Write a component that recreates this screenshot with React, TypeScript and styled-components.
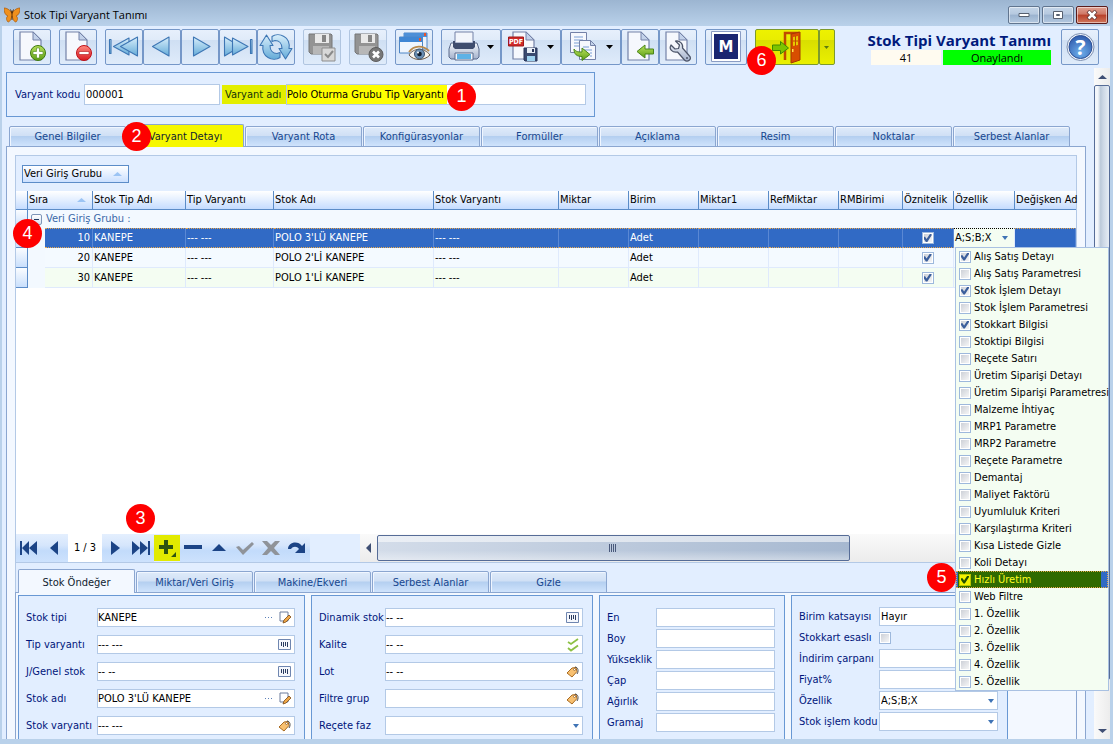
import React from 'react';
import styled, { createGlobalStyle, css } from 'styled-components';

const line = '#b3c9e6';
const edge = '#5b8cc8';
const navy = '#00157b';
const ui = '"DejaVu Sans Condensed", "DejaVu Sans", sans-serif';
const segoe = '"Open Sans", "Noto Sans", sans-serif';

const Global = createGlobalStyle`
  * { box-sizing: border-box; }
  body { margin: 0; overflow: hidden; font-family: ${ui}; font-size: 11px; line-height: 14px; color: #000; }
  button, input, select { font: inherit; color: inherit; margin: 0; }
  svg { display: block; flex: none; }
`;

const Window = styled.div`
  height: 100vh;
  display: flex;
  flex-direction: column;
  background: #b9d1ea;
  padding: 0 3px 5px 2px;
`;
const TitleBar = styled.header`
  height: 26px;
  flex: none;
  display: flex;
  align-items: center;
  gap: 4px;
  margin: 0 -3px 0 -2px;
  padding: 4px 5px 0 4px;
  background: linear-gradient(#9cb5d1, #b9d1ea);
  font-family: ${segoe};
  font-size: 11px;
  line-height: 18px;
`;
const WindowTitle = styled.span`flex: 1;`;
const WindowButtons = styled.div`display: flex; gap: 2px;`;
const WindowButton = styled.button<{ $close?: boolean }>`
  width: 32px;
  height: 18px;
  padding: 0;
  display: grid;
  place-items: center;
  border: 1px solid ${p => (p.$close ? '#5b1c1c' : '#61758f')};
  border-radius: 2px;
  box-shadow: inset 0 0 0 1px rgba(255, 255, 255, 0.5);
  background: ${p => p.$close
    ? 'linear-gradient(#e0a294, #cf7866 45%, #b8402a 50%, #d0775c)'
    : 'linear-gradient(#c5d5e8, #b6c9df 45%, #9bb3cf 50%, #b3c8e0)'};
`;

const Client = styled.main`
  flex: 1;
  min-height: 0;
  display: flex;
  flex-direction: column;
  overflow: hidden;
  background: #e2eeff;
`;
const Toolbar = styled.div`
  flex: none;
  height: 42px;
  display: flex;
  align-items: flex-start;
  gap: 8px;
  padding: 3px 11px 0;
`;
const ToolGroup = styled.div`display: flex; flex: none; position: relative;`;
const ToolButton = styled.button<{ $w?: number; $off?: boolean; $lit?: boolean }>`
  flex: none;
  width: ${p => p.$w ?? 38}px;
  height: 36px;
  padding: 0;
  display: flex;
  align-items: center;
  border: 1px solid ${p => (p.$lit ? '#7d9a2c' : p.$off ? '#b0c5e0' : '#7597c8')};
  border-radius: 2px;
  background: ${p => (p.$lit
    ? 'linear-gradient(#eef200, #e9ed00 28%, #d9de00 30%, #eaf000)'
    : 'linear-gradient(#e7f0fc, #e0ebf9 28%, #cfdff3 30%, #dfebfa)')};
`;
const Summary = styled.div`
  flex: none;
  margin: 0 2px 0 auto;
  display: flex;
  flex-direction: column;
  font-family: ${segoe};
`;
const SummaryTitle = styled.h1`
  margin: 0;
  height: 21px;
  font-size: 15px;
  line-height: 22px;
  font-weight: 700;
  text-align: right;
  white-space: nowrap;
  color: #001a7c;
`;
const SummaryRow = styled.div`display: flex; gap: 2px; justify-content: flex-end;`;
const SummaryCell = styled.span<{ $w: number; $bg: string }>`
  width: ${p => p.$w}px;
  height: 15px;
  text-align: center;
  font-size: 11px;
  line-height: 16px;
  background: ${p => p.$bg};
`;
const Badge = styled.span<{ $x: number; $y: number }>`
  position: absolute;
  z-index: 5;
  left: ${p => p.$x}px;
  top: ${p => p.$y}px;
  width: 29px;
  height: 29px;
  border-radius: 50%;
  background: #fe0000;
  color: #fff;
  font: 18px/29px "Liberation Sans", sans-serif;
  text-align: center;
`;

const Body = styled.div`flex: 1; min-height: 0; display: flex;`;
const Content = styled.div`
  flex: 1;
  min-width: 0;
  display: flex;
  flex-direction: column;
  align-items: stretch;
  padding: 4px 8px 0 4px;
`;
const HeaderBox = styled.section`
  position: relative;
  align-self: flex-start;
  height: 45px;
  display: flex;
  align-items: center;
  padding: 0 8px;
  border: 1px solid #6898d4;
`;
const HeaderLabel = styled.label<{ $lit?: boolean }>`
  width: ${p => (p.$lit ? 64 : 69)}px;
  height: 19px;
  margin-left: ${p => (p.$lit ? 2 : 0)}px;
  padding-left: ${p => (p.$lit ? 3 : 0)}px;
  line-height: 20px;
  white-space: nowrap;
  color: ${p => (p.$lit ? '#14340a' : navy)};
  background: ${p => (p.$lit ? '#e3ee00' : 'none')};
`;
const HeaderInput = styled.input<{ $w: number; $lit?: boolean }>`
  width: ${p => p.$w}px;
  height: 21px;
  padding: 0 ${p => (p.$lit ? 0 : 1)}px;
  border: 1px solid ${line};
  background: ${p => (p.$lit ? 'linear-gradient(90deg, #ff0 160px, #fff 160px)' : '#fff')};
`;

const Tabs = styled.div<{ $sub?: boolean }>`
  position: relative;
  flex: none;
  height: ${p => (p.$sub ? 24 : 23)}px;
  margin: ${p => (p.$sub ? 6 : 7)}px 0 -1px;
  padding-left: ${p => (p.$sub ? 2 : 3)}px;
  display: flex;
  align-items: flex-end;
  gap: 1px;
`;
const Tab = styled.button<{ $on?: boolean; $lit?: boolean }>`
  width: 117px;
  height: ${p => (p.$on ? 100 : 92)}%;
  padding: 2px 0 0;
  border: 1px solid #8ba6d0;
  border-bottom: ${p => (p.$on ? '0' : '1px solid #8ba6d0')};
  border-radius: 2px 2px 0 0;
  box-shadow: ${p => (p.$on ? 'none' : 'inset 1px 1px 0 #f0f6ff')};
  color: ${p => (p.$on ? '#101c30' : '#17478f')};
  background: ${p => (p.$lit ? '#f6f700' : p.$on ? '#f3f8ff'
    : 'linear-gradient(#dfebfa, #d0e0f5 45%, #b4cff0 50%, #cfe3fc)')};
`;
const Page = styled.div`
  flex: 1;
  min-height: 0;
  display: flex;
  flex-direction: column;
  padding: 8px 8px 0;
  border: 1px solid #8ba6d0;
  border-bottom: 0;
  background: #f3f8ff;
`;
const Inner = styled.div`
  flex: 1;
  min-height: 0;
  display: flex;
  flex-direction: column;
  border: 1px solid ${line};
  border-bottom: 0;
  background: #e2eeff;
`;
const GroupPanel = styled.div`height: 35px; flex: none; padding: 9px 6px;`;
const GroupChip = styled.button`
  width: 107px;
  height: 18px;
  padding: 0 6px 0 1px;
  display: flex;
  align-items: center;
  justify-content: space-between;
  border: 1px solid ${edge};
  background: linear-gradient(#fff, #cbe0ff);
`;
const GridArea = styled.div`position: relative; flex: 1; min-height: 0; background: #fff;`;

const Grid = styled.table`
  width: 100%;
  table-layout: fixed;
  border-collapse: separate;
  border-spacing: 0;
`;
const Head = styled.th`
  height: 19px;
  padding: 0 0 0 1px;
  white-space: nowrap;
  text-align: left;
  font-weight: 400;
  border-right: 1px solid ${edge};
  border-bottom: 1px solid ${edge};
  background: linear-gradient(#fff, #e9f2ff 40%, #c5dcff);
  &:last-child { border-right: 0; }
`;
const HeadSort = styled.span`display: flex; align-items: center; justify-content: space-between; padding-right: 6px;`;
const Mark = styled.td<{ $short?: boolean }>`
  height: ${p => (p.$short ? 18 : 20)}px;
  padding: 0;
  border-right: 1px solid ${edge};
  border-bottom: 1px solid ${edge};
  background: linear-gradient(#fbfdff, #c9dffc);
`;
const GroupCell = styled.td`
  height: 18px;
  padding: 0 3px;
  background: #f3f9ff;
  color: #3a68a8;
`;
const GroupLine = styled.span`display: flex; align-items: center; gap: 4px;`;
const Expander = styled.button`
  width: 11px;
  height: 11px;
  padding: 0;
  border: 1px solid #7d95b8;
  border-radius: 2px;
  background: linear-gradient(#fff, #d5e2f4);
  display: grid;
  place-items: center;
`;
const Cell = styled.td<{ $tone: 'sel' | 'a' | 'b' | 'edit'; $align?: string }>`
  height: 20px;
  padding: 0 2px 0 1px;
  white-space: nowrap;
  text-align: ${p => p.$align ?? 'left'};
  border-right: 1px solid #dfeafc;
  border-bottom: 1px solid #dfeafc;
  background: ${p => ({ a: '#f4faff', b: '#f4fdf2', sel: '#316ac5', edit: '#f4fdf2' })[p.$tone]};
  ${p => p.$tone === 'sel' && css`
    color: #fff;
    border-right-color: #5a88d4;
    border-top: 1px dotted #e8a850;
    border-bottom: 1px dotted #e8a850;
  `}
  ${p => p.$tone === 'edit' && css`position: relative; border-top: 1px dotted #000;`}
`;
const Indent = styled.td`padding: 0; background: #f3f9ff;`;

const Check = styled.input.attrs({ type: 'checkbox' })`
  appearance: none;
  flex: none;
  width: 12px;
  height: 12px;
  display: inline-grid;
  place-items: center;
  vertical-align: middle;
  border: 1px solid #9db8dc;
  box-shadow: inset 0 0 0 1px #fff;
  background: linear-gradient(135deg, #c8ccd4, #fafafa);
  &:checked::before {
    content: '';
    width: 8px;
    height: 8px;
    background: #3c5f9c;
    clip-path: polygon(0 35%, 20% 35%, 38% 62%, 80% 0, 100% 0, 100% 20%, 48% 100%, 30% 100%, 0 55%);
  }
`;
const CellSelect = styled.div`display: flex; align-items: center; justify-content: space-between; padding-right: 4px;`;
const Popup = styled.div`
  position: absolute;
  z-index: 4;
  left: 1px;
  top: 18px;
  width: 154px;
  border: 1px solid #a9c1e2;
  background: #f4fdf2;
  color: #000;
`;
const Option = styled.label<{ $on?: boolean }>`
  height: 17px;
  display: flex;
  align-items: center;
  gap: 3px;
  padding-left: 3px;
  white-space: nowrap;
  ${p => p.$on && css`
    color: #ffff20;
    border: 1px dotted #e8a850;
    padding-left: 2px;
    background: linear-gradient(90deg, #316ac5 1px, #2f6a00 1px calc(100% - 6px), #316ac5 0);
    ${Check} { background: #f2f200; border-color: #b8c400; box-shadow: none; }
    ${Check}:checked::before { background: #205000; }
  `}
`;

const Footer = styled.div`
  position: relative;
  flex: none;
  height: 29px;
  display: flex;
  border-bottom: 1px solid ${line};
`;
const NavButton = styled.button<{ $lit?: boolean }>`
  width: 26px;
  height: ${p => (p.$lit ? 26 : 28)}px;
  margin-top: ${p => (p.$lit ? 1 : 0)}px;
  padding: 0;
  border: 0;
  display: grid;
  place-items: center;
  background: ${p => (p.$lit ? '#e2ea00' : 'linear-gradient(#e4effe, #d6e6fc 40%, #c2dbfb 60%, #cde2fd)')};
`;
const NavText = styled.span`
  width: 34px;
  text-align: center;
  line-height: 28px;
  background: #fff;
`;
const HScroll = styled.div`
  flex: 1;
  margin-left: 50px;
  display: grid;
  grid-template-columns: 17px 66% 1fr;
  align-items: stretch;
  background: linear-gradient(#fafafa, #ececec);
`;
const Arrow = styled.button`
  padding: 0;
  border: 0;
  background: none;
  display: grid;
  place-items: center;
`;
const HThumb = styled.div`
  margin: 1px 0;
  border: 1px solid #566c97;
  border-radius: 2px;
  display: grid;
  place-items: center;
  background:
    linear-gradient(rgba(255, 255, 255, 0.55) 25%, rgba(255, 255, 255, 0) 27%, rgba(255, 255, 255, 0) 60%, rgba(255, 255, 255, 0.4)),
    linear-gradient(90deg, #d3dce9, #a6b8d0);
`;
const VScroll = styled.div`
  width: 16px;
  flex: none;
  display: flex;
  flex-direction: column;
  background: linear-gradient(90deg, #fafafa, #ececec);
  & > button { height: 17px; }
`;
const VThumb = styled.div`
  height: 595px;
  max-height: calc(100% - 76px);
  border: 1px solid #566c97;
  border-radius: 2px;
  background: linear-gradient(90deg, #f3f6fa 20%, #bccada 40%, #cdd8e6 60%, #e6edf5);
`;
const VTrack = styled.div`flex: 1;`;

const Forms = styled.div`
  flex: none;
  display: flex;
  gap: 6px;
  margin: 0 -1px;
  padding: 2px 2px 0;
  border: 1px solid #8ba6d0;
  border-bottom: 0;
  background: #f3f8ff;
`;
const FormBox = styled.fieldset<{ $cols: string; $gap: number; $padX: number; $top: number }>`
  min-width: 0;
  margin: 0;
  display: grid;
  grid-template-columns: ${p => p.$cols};
  grid-auto-rows: 19px;
  row-gap: ${p => p.$gap}px;
  align-items: center;
  align-content: start;
  padding: ${p => p.$top}px ${p => p.$padX}px 4px 7px;
  border: 1px solid #6898d4;
  border-bottom: 0;
  background: #e2eeff;
  color: ${navy};
  white-space: nowrap;
`;
const Field = styled.div`
  height: 19px;
  display: flex;
  align-items: center;
  gap: 6px;
  padding-right: 3px;
  border: 1px solid ${line};
  background: #fff;
  color: #000;
`;
const FieldInput = styled.input`
  flex: 1;
  min-width: 0;
  height: 17px;
  padding: 0;
  border: 0;
  background: none;
`;
const FieldSelect = styled.select`
  appearance: none;
  flex: 1;
  min-width: 0;
  height: 17px;
  padding: 0 1px;
  border: 0;
  background: none;
`;
const IconButton = styled.button`padding: 0; border: 0; background: none; display: block;`;
const HiddenDefs = styled.svg`position: absolute;`;

/* ---------- icons ---------- */

const Tool = ({ w = 36, children }: { w?: number; children: React.ReactNode }) => (
  <svg width={w} height="34" viewBox={`1 1 ${w} 34`} aria-hidden="true">{children}</svg>
);
const Sheet = ({ x = 7, y = 3, w = 21, h = 28 }) => (
  <>
    <path d={`M${x} ${y}h${w - 8}l8 8v${h - 8}h${-w}z`} fill="#f6f8fd" stroke="#7482a8" strokeWidth="1.2" />
    <path d={`M${x + w - 8} ${y}v8h8z`} fill="#c3d2ea" stroke="#7482a8" strokeWidth="1" />
  </>
);
const Down = ({ x }: { x: number }) => <path d={`M${x} 16h7l-3.500 4z`} fill="#000" />;
const Defs = () => (
  <HiddenDefs width="0" height="0" aria-hidden="true">
    <defs>
      <linearGradient id="sky" x1="0" y1="0" x2="0" y2="1">
        <stop offset="0" stopColor="#d8eefb" /><stop offset="1" stopColor="#64abd8" />
      </linearGradient>
      <linearGradient id="lime" x1="0" y1="0" x2="0" y2="1">
        <stop offset="0" stopColor="#b9e25c" /><stop offset="1" stopColor="#5d9e14" />
      </linearGradient>
      <linearGradient id="red" x1="0" y1="0" x2="0" y2="1">
        <stop offset="0" stopColor="#ff8a80" /><stop offset="1" stopColor="#d81820" />
      </linearGradient>
      <linearGradient id="steel" x1="0" y1="0" x2="0" y2="1">
        <stop offset="0" stopColor="#f4f7fb" /><stop offset="1" stopColor="#a3b1cc" />
      </linearGradient>
      <radialGradient id="help" cx="0.5" cy="0.75" r="0.8">
        <stop offset="0" stopColor="#6fb0ec" /><stop offset="1" stopColor="#2a55a8" />
      </radialGradient>
    </defs>
  </HiddenDefs>
);
const blue = { fill: 'url(#sky)', stroke: '#3d76b4', strokeWidth: 1.1, strokeLinejoin: 'round' as const };
const IconNew = () => (
  <Tool><Sheet /><circle cx="25" cy="24" r="7.500" fill="url(#lime)" stroke="#3f7a10" />
    <path d="M23.500 19h3v3.500h3.500v3h-3.500v3.500h-3v-3.500h-3.500v-3h3.500z" fill="#fff" stroke="#4a8518" strokeWidth=".6" /></Tool>
);
const IconDelete = () => (
  <Tool><Sheet /><circle cx="25" cy="24" r="7.500" fill="url(#red)" stroke="#c01018" />
    <path d="M20 22.500h10v3h-10z" fill="#fff" stroke="#b01018" strokeWidth=".6" /></Tool>
);
const IconFirst = () => (
  <Tool><path d="M4.500 10.500h1.500v14h-1.500z" {...blue} /><path d="M24 9v17L8.500 17.500z" {...blue} /><path d="M32.500 8v19L15.500 17.500z" {...blue} /></Tool>
);
const IconPrev = () => <Tool><path d="M26 8v19L9.500 17.500z" {...blue} /></Tool>;
const IconNext = () => <Tool><path d="M12.500 8v19L29 17.500z" {...blue} /></Tool>;
const IconLast = () => (
  <Tool><path d="M5.500 8v19L21.500 17.500z" {...blue} /><path d="M13.500 9v17L29 17.500z" {...blue} /><path d="M31.500 10.500h1.500v14h-1.500z" {...blue} /></Tool>
);
const IconRefresh = () => (
  <Tool>
    <path d="M3 16.500L9.500 6 16 16.500h-3c0 5 3 8 7 8l3-1v5c-3 2-8 2.500-12 0-4-2-6-7-5-12z" {...blue} />
    <path d="M35 19.500L28.500 30 22 19.500h3c0-5-3-8-7-8l-3 1v-5c3-2 8-2.500 12 0 4 2 6 7 5 12z" {...blue} />
  </Tool>
);
const Floppy = () => (
  <>
    <path d="M6 5h22l1 1v19H8l-2-2z" fill="#939393" stroke="#777" />
    <path d="M12 5h14v9H12z" fill="#e9e9e9" /><path d="M19 6h4v7h-4z" fill="#858585" />
    <path d="M10 17h16v8H10z" fill="#b7b7b7" />
  </>
);
const IconSave = () => (
  <Tool><Floppy /><path d="M19 19h13v13H19z" fill="#d8d8d8" stroke="#8d8d8d" /><path d="M22 25l3 3 5-6" fill="none" stroke="#8a8a8a" strokeWidth="2" /></Tool>
);
const IconCancel = () => (
  <Tool><Floppy /><circle cx="27" cy="25.500" r="7" fill="#777" stroke="#5d5d5d" /><path d="M24 22.500l6 6m0-6l-6 6" stroke="#fff" strokeWidth="2.600" /></Tool>
);
const IconPreview = () => (
  <Tool>
    <path d="M9 4h23v16H9z" fill="#e9f2fd" stroke="#4f86c6" /><path d="M9 4h23v4H9z" fill="#4c8fd8" /><path d="M29 4h2v3h-2z" fill="#e8542c" />
    <path d="M4.500 8h23v16h-23z" fill="#eef5fe" stroke="#4f86c6" /><path d="M5 8h22v5H5z" fill="#3f86d4" /><path d="M24 9h2v3h-2z" fill="#e8542c" />
    <path d="M14 26c4-7 15-8 21 0-6 6-16 6-21 0z" fill="#fbf6ee" stroke="#6c5a48" /><path d="M14 23c5-7 14-7 20-1" fill="none" stroke="#b98a4c" strokeWidth="1.800" />
    <circle cx="24.500" cy="25" r="5" fill="#6a8fb4" stroke="#3b5470" /><circle cx="24.500" cy="25" r="2.300" fill="#101c2c" /><circle cx="23" cy="23.500" r="1" fill="#fff" />
  </Tool>
);
const IconPrint = () => (
  <Tool w={58}>
    <path d="M10 14h26l2 6v8l-2 2H10l-2-2v-8z" fill="url(#steel)" stroke="#5a6a8c" />
    <path d="M14 3h18v11H14z" fill="#f2f5fb" stroke="#7482a8" />
    <path d="M12 12h2v2h18v-2h2v6l-2 2H14l-2-2z" fill="#3f4d6e" />
    <path d="M14 24h18v7H14z" fill="#f4f8fd" stroke="#5a6a8c" /><path d="M16 25h14v5H16z" fill="#5eb2e6" />
    <Down x={46} />
  </Tool>
);
const IconPdf = () => (
  <Tool w={58}>
    <Sheet x={12} w={21} h={27} />
    <path d="M7.500 8h15v9h-15z" fill="#d02a2a" stroke="#a01818" />
    <text x="15" y="15" textAnchor="middle" fontFamily="DejaVu Sans Condensed" fontWeight="700" fontSize="7" fill="#fff">PDF</text>
    <path d="M23 19h13v13H24l-1-1z" fill="#3a4a70" stroke="#26345a" /><path d="M26 19h8v5h-8z" fill="#e7edf6" /><path d="M31 20h2v3h-2z" fill="#26345a" /><path d="M26 27h8v5h-8z" fill="#9fd2f0" />
    <Down x={46} />
  </Tool>
);
const IconCopy = () => (
  <Tool w={58}>
    <path d="M9.500 3.500h16v20h-16z" fill="#f6f8fd" stroke="#7482a8" /><path d="M13 8h9m-9 3h9m-9 3h9m-9 3h5" stroke="#7b9fd4" />
    <path d="M18.500 11.500h11l5 5v14h-16z" fill="#f6f8fd" stroke="#7482a8" /><path d="M29.500 11.500v5h5z" fill="#c3d2ea" stroke="#7482a8" /><path d="M22 18h6m-6 3h9m-2 3h2m-2 3h2" stroke="#7b9fd4" />
    <path d="M13 20c2 3 5 3 8 3v-4l8 6.500-8 6v-4c-5 0-8-2-8-7.500z" fill="url(#lime)" stroke="#4a8518" />
    <Down x={45} />
  </Tool>
);
const greenArrow = { fill: 'url(#lime)', stroke: '#4a8518', strokeLinejoin: 'round' as const };
const IconImport = () => <Tool><Sheet /><path d="M16 22.500l8-6.500v4h8.500v5H24v4z" {...greenArrow} /></Tool>;
const IconTools = () => (
  <Tool><Sheet />
    <path d="M12 16l4 4 3.500-.5 1-3.500-4-4c4-1 8 3 7 7l7 8c3 3-2 7-5 4l-7-8c-5 1-9-3-6.500-7z" fill="url(#steel)" stroke="#4c5468" strokeWidth="1.200" strokeLinejoin="round" />
    <circle cx="28" cy="29" r="1" fill="#4c5468" />
  </Tool>
);
const IconM = () => (
  <Tool w={40}>
    <path d="M6.500 2.500h29v30h-29z" fill="#fff" stroke="#8a9cc4" /><path d="M9 5h24v25H9z" fill="#1a2570" />
    <text x="21" y="23" textAnchor="middle" fontFamily="DejaVu Sans" fontWeight="700" fontSize="15" fill="#fff">M</text>
  </Tool>
);
const IconExit = () => (
  <Tool w={62}>
    <path d="M30 31V4h14" fill="none" stroke="#c04a00" strokeWidth="2.500" />
    <path d="M36 5l9-2v28l-9 3z" fill="#d84e00" stroke="#a63800" />
    <path d="M38 8l5-1v9l-5 1z" fill="#e8c800" /><path d="M40.500 7v10M38 12h5" stroke="#c04a00" /><path d="M37 20h1.500v3H37z" fill="#ffe14a" />
    <path d="M17.500 16h8v-3.500l8 6.500-8 6v-3.500h-8z" fill="#7cc400" stroke="#3f8a00" />
  </Tool>
);
const IconHelp = () => (
  <Tool>
    <circle cx="19.500" cy="18" r="13.500" fill="#f1f5fb" stroke="#7d8fb0" /><circle cx="19.500" cy="18" r="11.500" fill="url(#help)" stroke="#2d5096" />
    <text x="19.500" y="25.500" textAnchor="middle" fontFamily="Open Sans" fontWeight="700" fontSize="21" fill="#fff">?</text>
  </Tool>
);
const Butterfly = () => (
  <svg width="16" height="16" viewBox="0 0 16 16" aria-hidden="true">
    <path d="M8 7C6 2 2 1 0 1c0 4 1 7 4 8-2 1-2 4 0 6 2 0 3-3 4-6 1 3 2 6 4 6 2-2 2-5 0-6 3-1 4-4 4-8-2 0-6 1-8 6z" fill="#f0901c" stroke="#a85808" strokeWidth=".7" />
    <path d="M8 5v8M6.500 2.500L8 6l1.500-3.500" fill="none" stroke="#5a2c00" />
  </svg>
);
const Tri = ({ c = '#4f7fbf', up = false, w = 7 }: { c?: string; up?: boolean; w?: number }) => (
  <svg width={w} height="4" viewBox="0 0 8 4" preserveAspectRatio="none" aria-hidden="true"><path d={up ? 'M0 4h8L4 0z' : 'M0 0h8L4 4z'} fill={c} /></svg>
);
const Nav = ({ d, c = '#1c4486' }: { d: string; c?: string }) => (
  <svg width="20" height="18" viewBox="0 0 20 18" aria-hidden="true"><path d={d} fill={c} /></svg>
);
const Dots = () => <svg width="9" height="9" viewBox="0 0 9 9" aria-hidden="true"><path d="M1 4h1v1H1zM4 4h1v1H4zM7 4h1v1H7z" fill="#5a7fb8" /></svg>;
const EditIcon = () => (
  <svg width="12" height="13" viewBox="0 0 12 13" aria-hidden="true">
    <path d="M1 1h8v9H1z" fill="#fff" stroke="#6c7c9c" /><path d="M4 12l1-3 5-5 2 2-5 5z" fill="#f0a848" stroke="#7a4a18" strokeWidth=".8" />
  </svg>
);
const BarsIcon = () => (
  <svg width="13" height="11" viewBox="0 0 13 11" aria-hidden="true">
    <path d="M.5.5h12v10H.5z" fill="#f6f8fd" stroke="#6f86b0" /><path d="M3.500 3v4M5.500 3v5M7.500 3v4M9.500 3v5" stroke="#2b3c60" />
  </svg>
);
const TagIcon = () => (
  <svg width="13" height="12" viewBox="0 0 13 12" aria-hidden="true">
    <path d="M1 7l5-5 4-.5 1 4-5 5.500z" fill="#f8c070" stroke="#a86a20" /><circle cx="8.500" cy="3.500" r="1" fill="#fff" stroke="#7a4a18" strokeWidth=".6" />
    <path d="M9 1c3 0 4 4 2 7" fill="none" stroke="#4a4a4a" />
  </svg>
);
const ChecksIcon = () => (
  <svg width="12" height="14" viewBox="0 0 12 14" aria-hidden="true"><path d="M1 4l3 2 7-5M1 10l3 2.500L11 7.500" fill="none" stroke="#8cc044" strokeWidth="1.800" /></svg>
);
const Chevron = () => <Tri w={6} c="#3f73b5" />;

/* ---------- data ---------- */

const mainTabs = ['Genel Bilgiler', 'Varyant Detayı', 'Varyant Rota', 'Konfigürasyonlar', 'Formüller', 'Açıklama', 'Resim', 'Noktalar', 'Serbest Alanlar'];
const subTabs = ['Stok Öndeğer', 'Miktar/Veri Giriş', 'Makine/Ekveri', 'Serbest Alanlar', 'Gizle'];
const columns: [string, number?][] = [
  ['Stok Tip Adı', 93], ['Tip Varyantı', 88], ['Stok Adı', 160], ['Stok Varyantı', 125], ['Miktar', 70], ['Birim', 70],
  ['Miktar1', 70], ['RefMiktar', 70], ['RMBirimi', 64], ['Öznitelik', 51], ['Özellik', 61], ['Değişken Ad'],
];
const rows = [[10, "POLO 3'LÜ KANEPE"], [20, "POLO 2'Lİ KANEPE"], [30, "POLO 1'Lİ KANEPE"]] as const;
const options = [
  'Alış Satış Detayı', 'Alış Satış Parametresi', 'Stok İşlem Detayı', 'Stok İşlem Parametresi', 'Stokkart Bilgisi',
  'Stoktipi Bilgisi', 'Reçete Satırı', 'Üretim Siparişi Detayı', 'Üretim Siparişi Parametresi', 'Malzeme İhtiyaç',
  'MRP1 Parametre', 'MRP2 Parametre', 'Reçete Parametre', 'Demantaj', 'Maliyet Faktörü', 'Uyumluluk Kriteri',
  'Karşılaştırma Kriteri', 'Kısa Listede Gizle', 'Koli Detayı', 'Hızlı Üretim', 'Web Filtre',
  '1. Özellik', '2. Özellik', '3. Özellik', '4. Özellik', '5. Özellik',
];
const ticked = new Set([0, 2, 4, 19]);

type Entry = { label: string; value?: string; kind?: 'edit' | 'bars' | 'tag' | 'checks' | 'select' | 'tick' };
const stock: Entry[] = [
  { label: 'Stok tipi', value: 'KANEPE', kind: 'edit' }, { label: 'Tip varyantı', value: '--- ---', kind: 'bars' },
  { label: 'J/Genel stok', value: '-- --', kind: 'bars' }, { label: 'Stok adı', value: "POLO 3'LÜ KANEPE", kind: 'edit' },
  { label: 'Stok varyantı', value: '--- ---', kind: 'tag' },
];
const dynamic: Entry[] = [
  { label: 'Dinamik stok', value: '-- --', kind: 'bars' }, { label: 'Kalite', value: '-- --', kind: 'checks' },
  { label: 'Lot', value: '-- --', kind: 'tag' }, { label: 'Filtre grup', kind: 'tag' }, { label: 'Reçete faz', kind: 'select' },
];
const sizes: Entry[] = ['En', 'Boy', 'Yükseklik', 'Çap', 'Ağırlık', 'Gramaj'].map(label => ({ label }));
const factors: Entry[] = [
  { label: 'Birim katsayısı', value: 'Hayır', kind: 'select' }, { label: 'Stokkart esaslı', kind: 'tick' },
  { label: 'İndirim çarpanı' }, { label: 'Fiyat%' }, { label: 'Özellik', value: 'A;S;B;X', kind: 'select' },
  { label: 'Stok işlem kodu', kind: 'select' },
];

const Entries = ({ items, prefix }: { items: Entry[]; prefix: string }) => (
  <>
    {items.map(({ label, value = '', kind }, i) => {
      const id = `${prefix}${i}`;
      return (
        <React.Fragment key={id}>
          <label htmlFor={id}>{label}</label>
          {kind === 'tick' ? <span><Check id={id} /></span> : (
            <Field>
              {kind === 'select'
                ? <><FieldSelect id={id} defaultValue={value}><option>{value}</option></FieldSelect><Chevron /></>
                : <FieldInput id={id} defaultValue={value} />}
              {kind === 'edit' && <><IconButton aria-label="Seç"><Dots /></IconButton><IconButton aria-label="Düzenle"><EditIcon /></IconButton></>}
              {kind === 'bars' && <IconButton aria-label="Ara"><BarsIcon /></IconButton>}
              {kind === 'tag' && <IconButton aria-label="Etiket"><TagIcon /></IconButton>}
              {kind === 'checks' && <IconButton aria-label="Kalite seç"><ChecksIcon /></IconButton>}
            </Field>
          )}
        </React.Fragment>
      );
    })}
  </>
);

const OptionPopup = () => (
  <Popup>
    {options.map((text, i) => (
      <Option key={text} $on={i === 19}><Check defaultChecked={ticked.has(i)} />{text}</Option>
    ))}
    <Badge $x={-29} $y={315}>5</Badge>
  </Popup>
);

const VariantGrid = () => (
  <Grid>
    <colgroup>
      <col style={{ width: 12 }} /><col style={{ width: 17 }} /><col style={{ width: 48 }} />
      {columns.map(([name, w]) => <col key={name} style={{ width: w }} />)}
    </colgroup>
    <thead>
      <tr>
        <Head />
        <Head colSpan={2}><HeadSort>Sıra<Tri up w={9} c="#9cc4f4" /></HeadSort></Head>
        {columns.map(([name]) => <Head key={name}>{name}</Head>)}
      </tr>
    </thead>
    <tbody>
      <tr>
        <Mark $short />
        <GroupCell colSpan={14}>
          <GroupLine>
            <Expander aria-label="Daralt"><svg width="5" height="1"><path d="M0 0h5v1H0z" fill="#223a60" /></svg></Expander>
            Veri Giriş Grubu :
          </GroupLine>
        </GroupCell>
      </tr>
      {rows.map(([no, name], i) => {
        const tone = (['sel', 'a', 'b'] as const)[i];
        return (
          <tr key={no}>
            <Mark />
            <Indent />
            <Cell $tone={tone} $align="right">{no}</Cell>
            <Cell $tone={tone}>KANEPE</Cell>
            <Cell $tone={tone}>--- ---</Cell>
            <Cell $tone={tone}>{name}</Cell>
            <Cell $tone={tone}>--- ---</Cell>
            <Cell $tone={tone} />
            <Cell $tone={tone}>Adet</Cell>
            <Cell $tone={tone} /><Cell $tone={tone} /><Cell $tone={tone} />
            <Cell $tone={tone} $align="center"><Check defaultChecked aria-label="Öznitelik" /></Cell>
            {i === 0
              ? <Cell $tone="edit"><CellSelect>A;S;B;X<Chevron /></CellSelect><OptionPopup /></Cell>
              : <Cell $tone={tone} />}
            <Cell $tone={tone} />
          </tr>
        );
      })}
    </tbody>
  </Grid>
);

export default function App() {
  return (
    <Window>
      <Global />
      <Defs />
      <TitleBar>
        <Butterfly />
        <WindowTitle>Stok Tipi Varyant Tanımı</WindowTitle>
        <WindowButtons>
          <WindowButton aria-label="Küçült"><svg width="12" height="6"><path d="M1 1.500h10v3H1z" fill="#fff" stroke="#566070" /></svg></WindowButton>
          <WindowButton aria-label="Büyüt"><svg width="12" height="10"><path d="M1.500 1.500h9v7h-9z" fill="#fff" stroke="#566070" /><path d="M4.500 4.500h3v1h-3z" fill="none" stroke="#566070" /></svg></WindowButton>
          <WindowButton $close aria-label="Kapat"><svg width="12" height="10"><path d="M2 1l8 8m0-8L2 9" stroke="#5c3030" strokeWidth="4" /><path d="M2.500 1.500l7 7m0-7l-7 7" stroke="#fff" strokeWidth="2.500" /></svg></WindowButton>
        </WindowButtons>
      </TitleBar>
      <Client>
        <Toolbar>
          <ToolGroup><ToolButton aria-label="Yeni"><IconNew /></ToolButton></ToolGroup>
          <ToolGroup><ToolButton aria-label="Sil"><IconDelete /></ToolButton></ToolGroup>
          <ToolGroup>
            <ToolButton aria-label="İlk"><IconFirst /></ToolButton>
            <ToolButton aria-label="Önceki"><IconPrev /></ToolButton>
            <ToolButton aria-label="Sonraki"><IconNext /></ToolButton>
            <ToolButton aria-label="Son"><IconLast /></ToolButton>
            <ToolButton aria-label="Yenile"><IconRefresh /></ToolButton>
          </ToolGroup>
          <ToolGroup><ToolButton $off aria-label="Kaydet"><IconSave /></ToolButton></ToolGroup>
          <ToolGroup><ToolButton $off aria-label="Vazgeç"><IconCancel /></ToolButton></ToolGroup>
          <ToolGroup><ToolButton aria-label="Önizleme"><IconPreview /></ToolButton></ToolGroup>
          <ToolGroup>
            <ToolButton $w={60} aria-label="Yazdır"><IconPrint /></ToolButton>
            <ToolButton $w={60} aria-label="PDF"><IconPdf /></ToolButton>
            <ToolButton $w={60} aria-label="Kopyala"><IconCopy /></ToolButton>
            <ToolButton aria-label="Al"><IconImport /></ToolButton>
            <ToolButton aria-label="Ayarlar"><IconTools /></ToolButton>
          </ToolGroup>
          <ToolGroup><ToolButton $w={42} aria-label="M"><IconM /></ToolButton></ToolGroup>
          <ToolGroup>
            <ToolButton $w={64} $lit aria-label="Çıkış"><IconExit /></ToolButton>
            <ToolButton $w={16} $lit aria-label="Çıkış seçenekleri"><svg width="14" height="34"><path d="M4 16h5l-2.500 3z" fill="#5c7a10" /></svg></ToolButton>
            <Badge $x={-8} $y={17}>6</Badge>
          </ToolGroup>
          <Summary>
            <SummaryTitle>Stok Tipi Varyant Tanımı</SummaryTitle>
            <SummaryRow>
              <SummaryCell $w={70} $bg="#fffbf0">41</SummaryCell>
              <SummaryCell $w={108} $bg="#00ff00">Onaylandı</SummaryCell>
            </SummaryRow>
          </Summary>
          <ToolButton aria-label="Yardım"><IconHelp /></ToolButton>
        </Toolbar>
        <Body>
          <Content>
            <HeaderBox>
              <HeaderLabel htmlFor="code">Varyant kodu</HeaderLabel>
              <HeaderInput id="code" $w={136} defaultValue="000001" />
              <HeaderLabel htmlFor="name" $lit>Varyant adı</HeaderLabel>
              <HeaderInput id="name" $w={300} $lit defaultValue="Polo Oturma Grubu Tip Varyantı" />
              <Badge $x={440} $y={9}>1</Badge>
            </HeaderBox>
            <Tabs>
              {mainTabs.map((t, i) => <Tab key={t} $on={i === 1} $lit={i === 1}>{t}</Tab>)}
              <Badge $x={116} $y={-2}>2</Badge>
            </Tabs>
            <Page>
              <Inner>
                <GroupPanel><GroupChip>Veri Giriş Grubu<Tri up w={9} c="#9cc4f4" /></GroupChip></GroupPanel>
                <GridArea>
                  <VariantGrid />
                  <Badge $x={-3} $y={28}>4</Badge>
                </GridArea>
                <Footer>
                  <NavButton aria-label="İlk kayıt"><Nav d="M1 2h2v14H1zM10 2v14L3 9zM18 2v14l-8-7z" /></NavButton>
                  <NavButton aria-label="Önceki kayıt"><Nav d="M13 2v14L5 9z" /></NavButton>
                  <NavText>1 / 3</NavText>
                  <NavButton aria-label="Sonraki kayıt"><Nav d="M6 2v14l9-7z" /></NavButton>
                  <NavButton aria-label="Son kayıt"><Nav d="M1 2v14l8-7zM9 2v14l8-7zM17 2h2v14h-2z" /></NavButton>
                  <NavButton $lit aria-label="Ekle"><Nav c="#2f5410" d="M7 1h4v5h5v4h-5v5H7v-5H2V6h5zM19 13v5h-5z" /></NavButton>
                  <NavButton aria-label="Çıkar"><Nav d="M1 6h18v4H1z" /></NavButton>
                  <NavButton aria-label="Yukarı"><Nav d="M3 12h14l-7-7z" /></NavButton>
                  <NavButton aria-label="Onayla"><Nav c="#8f9399" d="M1 8l3-1 4 4 9-8 2 2L8 16z" /></NavButton>
                  <NavButton aria-label="İptal"><Nav c="#8f9399" d="M1 2h5l4 4 4-4h5l-6 7 6 7h-5l-4-4-4 4H1l6-7z" /></NavButton>
                  <NavButton aria-label="Tazele"><Nav d="M1 10c0-7 10-9 14-3l3-3v10H8l4-4c-2-3-6-3-8 0z" /></NavButton>
                  <HScroll>
                    <Arrow aria-label="Sola kaydır"><svg width="5" height="10"><path d="M5 0v10L0 5z" fill="#3f4f74" /></svg></Arrow>
                    <HThumb><svg width="8" height="8"><path d="M.5 0v8M2.500 0v8M4.500 0v8M6.500 0v8" stroke="#4a5a7c" /></svg></HThumb>
                  </HScroll>
                  <Badge $x={110} $y={-30}>3</Badge>
                </Footer>
                <Tabs $sub>
                  {subTabs.map((t, i) => <Tab key={t} $on={i === 0}>{t}</Tab>)}
                </Tabs>
                <Forms>
                  <FormBox $cols="71px 198px" $gap={8} $padX={9} $top={12}><Entries items={stock} prefix="s" /></FormBox>
                  <FormBox $cols="66px 198px" $gap={8} $padX={9} $top={12}><Entries items={dynamic} prefix="d" /></FormBox>
                  <FormBox $cols="49px 119px" $gap={2} $padX={9} $top={12}><Entries items={sizes} prefix="b" /></FormBox>
                  <FormBox $cols="80px 119px" $gap={2} $padX={9} $top={11}><Entries items={factors} prefix="f" /></FormBox>
                </Forms>
              </Inner>
            </Page>
          </Content>
          <VScroll>
            <Arrow aria-label="Yukarı kaydır"><Tri up w={9} c="#3f4f74" /></Arrow>
            <VThumb />
            <VTrack />
            <Arrow aria-label="Aşağı kaydır"><Tri w={9} c="#3f4f74" /></Arrow>
          </VScroll>
        </Body>
      </Client>
    </Window>
  );
}
